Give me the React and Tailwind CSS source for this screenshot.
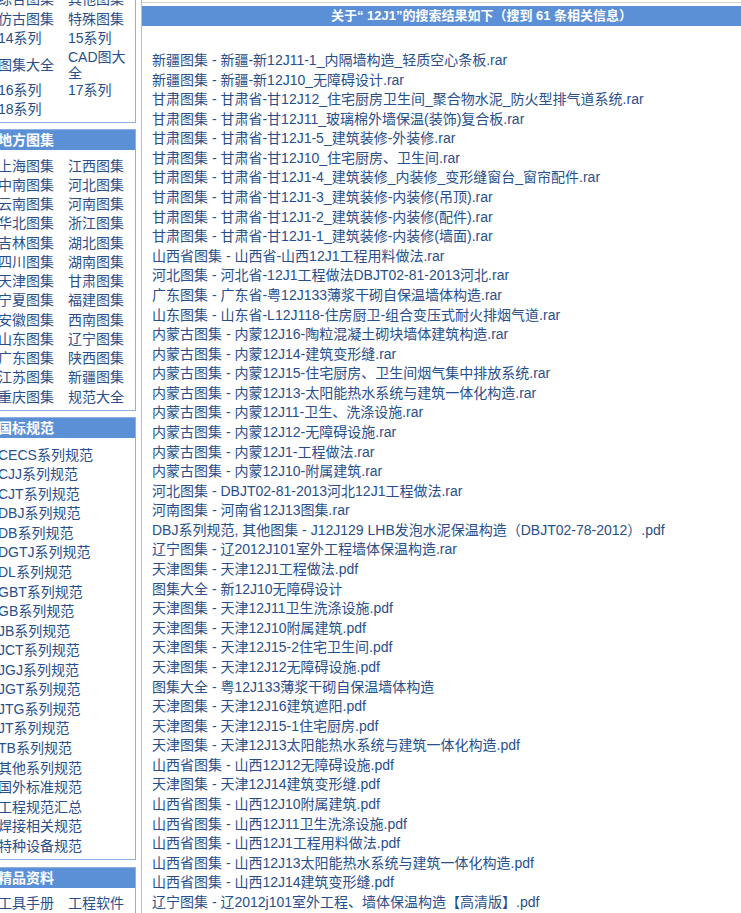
import React from 'react';

const topRows = [
    ['综合图集', '其他图集'],
    ['仿古图集', '特殊图集'],
    ['14系列', '15系列'],
    ['图集大全', 'CAD图大全'],
    ['16系列', '17系列'],
    ['18系列', ''],
];

const regionRows = [
    ['上海图集', '江西图集'],
    ['中南图集', '河北图集'],
    ['云南图集', '河南图集'],
    ['华北图集', '浙江图集'],
    ['吉林图集', '湖北图集'],
    ['四川图集', '湖南图集'],
    ['天津图集', '甘肃图集'],
    ['宁夏图集', '福建图集'],
    ['安徽图集', '西南图集'],
    ['山东图集', '辽宁图集'],
    ['广东图集', '陕西图集'],
    ['江苏图集', '新疆图集'],
    ['重庆图集', '规范大全'],
];

const standards = [
    'CECS系列规范', 'CJJ系列规范', 'CJT系列规范', 'DBJ系列规范', 'DB系列规范', 'DGTJ系列规范',
    'DL系列规范', 'GBT系列规范', 'GB系列规范', 'JB系列规范', 'JCT系列规范', 'JGJ系列规范',
    'JGT系列规范', 'JTG系列规范', 'JT系列规范', 'TB系列规范', '其他系列规范', '国外标准规范',
    '工程规范汇总', '焊接相关规范', '特种设备规范',
];

const results = [
    '新疆图集 - 新疆-新12J11-1_内隔墙构造_轻质空心条板.rar',
    '新疆图集 - 新疆-新12J10_无障碍设计.rar',
    '甘肃图集 - 甘肃省-甘12J12_住宅厨房卫生间_聚合物水泥_防火型排气道系统.rar',
    '甘肃图集 - 甘肃省-甘12J11_玻璃棉外墙保温(装饰)复合板.rar',
    '甘肃图集 - 甘肃省-甘12J1-5_建筑装修-外装修.rar',
    '甘肃图集 - 甘肃省-甘12J10_住宅厨房、卫生间.rar',
    '甘肃图集 - 甘肃省-甘12J1-4_建筑装修_内装修_变形缝窗台_窗帘配件.rar',
    '甘肃图集 - 甘肃省-甘12J1-3_建筑装修-内装修(吊顶).rar',
    '甘肃图集 - 甘肃省-甘12J1-2_建筑装修-内装修(配件).rar',
    '甘肃图集 - 甘肃省-甘12J1-1_建筑装修-内装修(墙面).rar',
    '山西省图集 - 山西省-山西12J1工程用料做法.rar',
    '河北图集 - 河北省-12J1工程做法DBJT02-81-2013河北.rar',
    '广东图集 - 广东省-粤12J133薄浆干砌自保温墙体构造.rar',
    '山东图集 - 山东省-L12J118-住房厨卫-组合变压式耐火排烟气道.rar',
    '内蒙古图集 - 内蒙12J16-陶粒混凝土砌块墙体建筑构造.rar',
    '内蒙古图集 - 内蒙12J14-建筑变形缝.rar',
    '内蒙古图集 - 内蒙12J15-住宅厨房、卫生间烟气集中排放系统.rar',
    '内蒙古图集 - 内蒙12J13-太阳能热水系统与建筑一体化构造.rar',
    '内蒙古图集 - 内蒙12J11-卫生、洗涤设施.rar',
    '内蒙古图集 - 内蒙12J12-无障碍设施.rar',
    '内蒙古图集 - 内蒙12J1-工程做法.rar',
    '内蒙古图集 - 内蒙12J10-附属建筑.rar',
    '河北图集 - DBJT02-81-2013河北12J1工程做法.rar',
    '河南图集 - 河南省12J13图集.rar',
    'DBJ系列规范, 其他图集 - J12J129 LHB发泡水泥保温构造（DBJT02-78-2012）.pdf',
    '辽宁图集 - 辽2012J101室外工程墙体保温构造.rar',
    '天津图集 - 天津12J1工程做法.pdf',
    '图集大全 - 新12J10无障碍设计',
    '天津图集 - 天津12J11卫生洗涤设施.pdf',
    '天津图集 - 天津12J10附属建筑.pdf',
    '天津图集 - 天津12J15-2住宅卫生间.pdf',
    '天津图集 - 天津12J12无障碍设施.pdf',
    '图集大全 - 粤12J133薄浆干砌自保温墙体构造',
    '天津图集 - 天津12J16建筑遮阳.pdf',
    '天津图集 - 天津12J15-1住宅厨房.pdf',
    '天津图集 - 天津12J13太阳能热水系统与建筑一体化构造.pdf',
    '山西省图集 - 山西12J12无障碍设施.pdf',
    '天津图集 - 天津12J14建筑变形缝.pdf',
    '山西省图集 - 山西12J10附属建筑.pdf',
    '山西省图集 - 山西12J11卫生洗涤设施.pdf',
    '山西省图集 - 山西12J1工程用料做法.pdf',
    '山西省图集 - 山西12J13太阳能热水系统与建筑一体化构造.pdf',
    '山西省图集 - 山西12J14建筑变形缝.pdf',
    '辽宁图集 - 辽2012j101室外工程、墙体保温构造【高清版】.pdf',
];

const BoxHeader = ({ children }) => (
    <div className="h-[20px] bg-[#5b8fd6] pl-[7px] text-[14px] font-bold leading-[20px] text-white">
        {children}
    </div>
);

const PairGrid = ({ rows, rowHeight }) => (
    <div className="pl-[7px]">
        {rows.map(([a, b], i) => (
            <div key={i} className={`grid grid-cols-[70px_1fr] items-center ${rowHeight}`}>
                <span>{a}</span>
                <span>{b}</span>
            </div>
        ))}
    </div>
);

const App = () => {
    return (
        <div
            className="flex h-[913px] w-[741px] overflow-hidden bg-white text-[14px] text-[#284f8c]"
            style={{ fontFamily: '"Liberation Sans", "Noto Sans CJK SC", sans-serif' }}
        >
            {/* sidebar, its left edge runs out of the window */}
            <div className="-mt-[10px] w-[141px] shrink-0">
                <div className="-ml-[10px] w-[146px] border border-t-0 border-[#8db0e0] pb-[2px]">
                    {topRows.map(([a, b], i) => (
                        <div
                            key={i}
                            className={`grid grid-cols-[70px_1fr] items-center pl-[7px] ${i === 3 ? 'h-[32px] leading-[16px]' : 'h-[19.5px] leading-[19.5px]'}`}
                        >
                            <span>{a}</span>
                            <span>{b}</span>
                        </div>
                    ))}
                </div>

                <div className="-ml-[10px] mt-[6px] w-[146px] border border-[#8db0e0] pb-[3px]">
                    <BoxHeader>地方图集</BoxHeader>
                    <div className="pt-[7px]">
                        <PairGrid rows={regionRows} rowHeight="h-[19.25px] leading-[19.25px]" />
                    </div>
                </div>

                <div className="-ml-[10px] mt-[6px] w-[146px] border border-[#8db0e0] pb-[3px]">
                    <BoxHeader>国标规范</BoxHeader>
                    <div className="pl-[7px] pt-[8px]">
                        {standards.map((s) => (
                            <div key={s} className="h-[19.55px] leading-[19.55px]">{s}</div>
                        ))}
                    </div>
                </div>

                <div className="-ml-[10px] mt-[7px] w-[146px] border border-[#8db0e0]">
                    <BoxHeader>精品资料</BoxHeader>
                    <div className="pt-[6px]">
                        <PairGrid rows={[['工具手册', '工程软件']]} rowHeight="h-[19.5px] leading-[19.5px]" />
                    </div>
                </div>
            </div>

            {/* main */}
            <div className="flex-1 border-l border-[#a9c2e6]">
                <div className="mt-[2px] border-t border-[#d4d4d4] pt-[3px]">
                    <div className="h-[20px] bg-[#5b8fd6] pl-[80px] text-center text-[13px] font-bold leading-[20px] text-white">
                        关于“ 12J1”的搜索结果如下（搜到 61 条相关信息）
                    </div>
                </div>
                <div className="pl-[10px] pt-[25px]">
                    {results.map((r, i) => (
                        <div key={i} className="h-[19.58px] whitespace-nowrap leading-[19.58px]">
                            {r}
                        </div>
                    ))}
                </div>
            </div>
        </div>
    );
};

export default App;
